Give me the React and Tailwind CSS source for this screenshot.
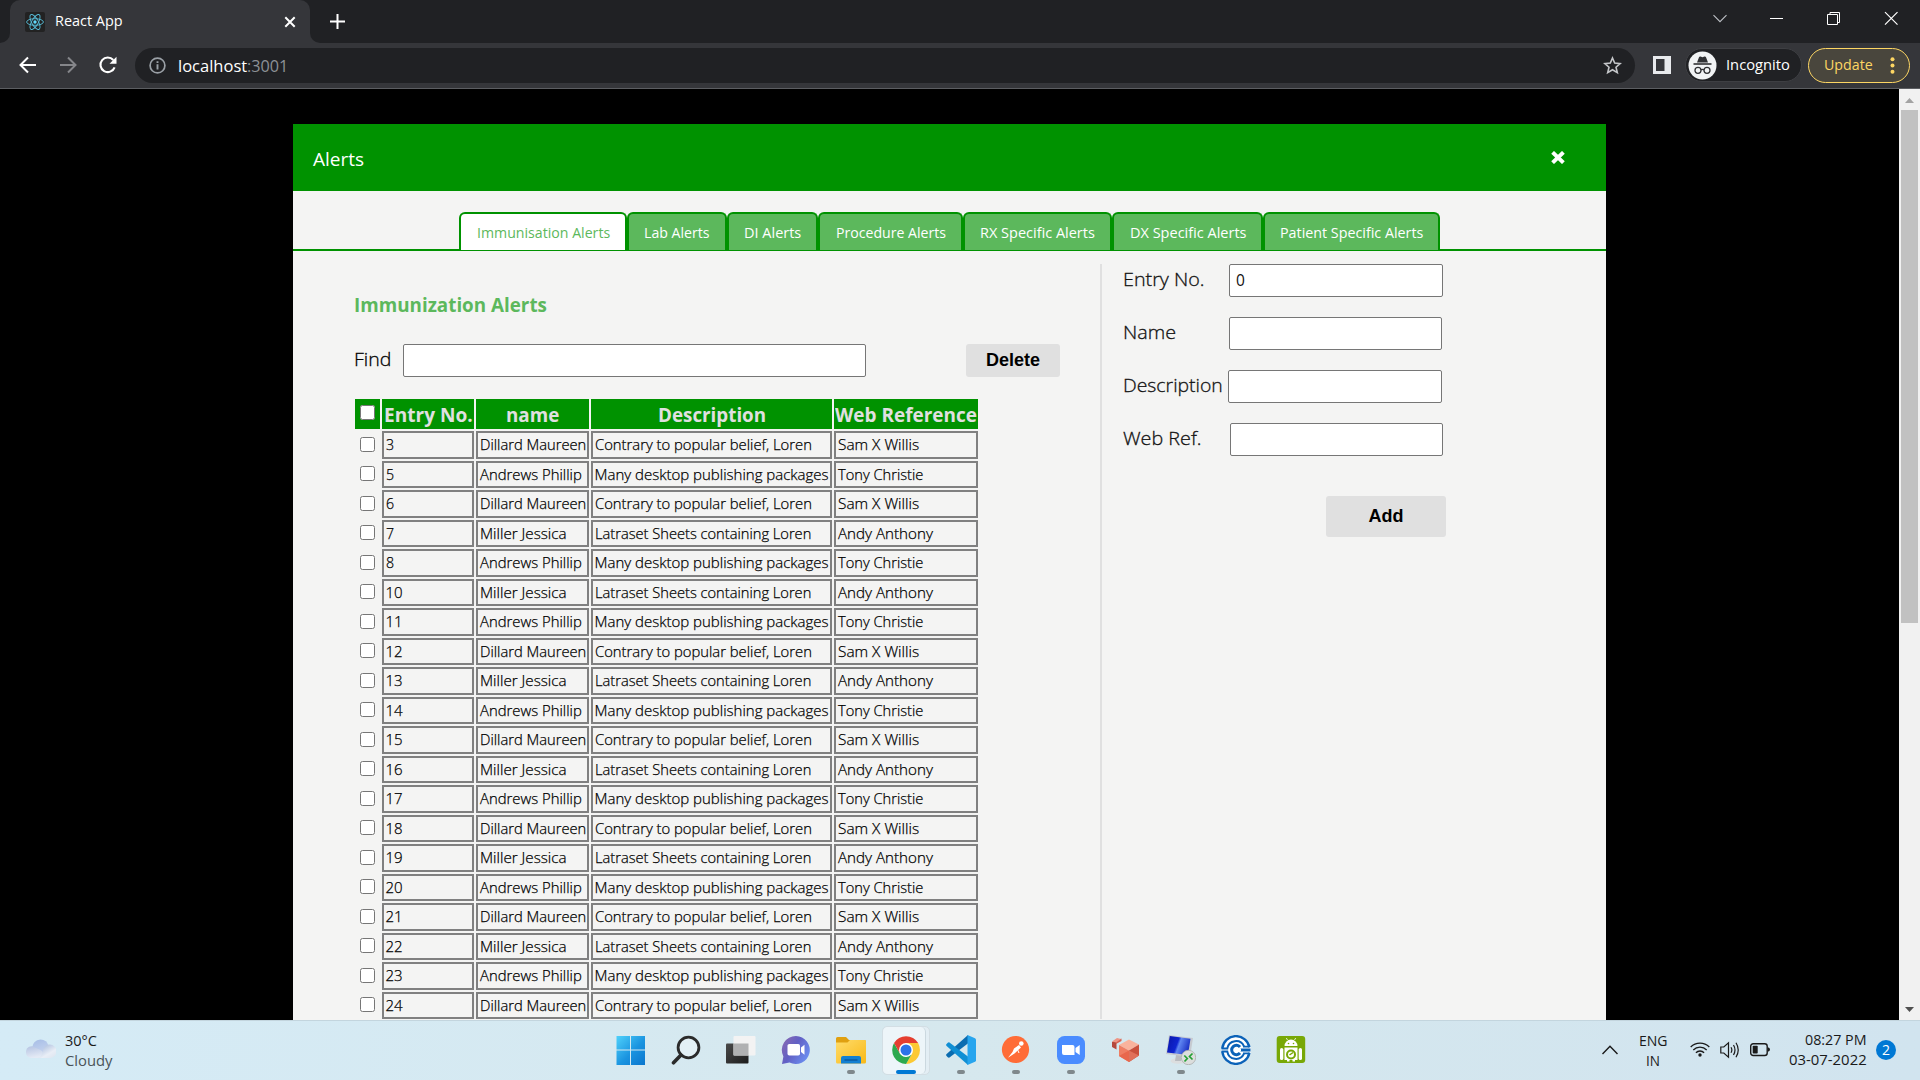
import { useLayoutEffect, useRef, useState } from "react";

// Single line of text whose glyphs are scaled horizontally to fill `w` pixels.
function T({ w, className = "", children }) {
  const ref = useRef(null);
  const [k, setK] = useState(1);
  useLayoutEffect(() => {
    const natural = ref.current.offsetWidth;
    if (natural) setK(w / natural);
  }, [w, children]);
  return (
    <span className={"inline-block whitespace-nowrap text-left " + className} style={{ width: w }}>
      <span ref={ref} className="inline-block origin-left whitespace-nowrap" style={{ transform: `scaleX(${k})` }}>
        {children}
      </span>
    </span>
  );
}

/* ---------- browser chrome ---------- */

function ReactLogo() {
  return (
    <svg width="20" height="20" viewBox="0 0 20 20" className="shrink-0">
      <rect width="20" height="20" rx="2" fill="#222222" />
      <g fill="none" stroke="#61dafb" strokeWidth="0.9" opacity="0.85">
        <ellipse cx="10" cy="10" rx="8.4" ry="3.3" />
        <ellipse cx="10" cy="10" rx="8.4" ry="3.3" transform="rotate(60 10 10)" />
        <ellipse cx="10" cy="10" rx="8.4" ry="3.3" transform="rotate(120 10 10)" />
      </g>
      <circle cx="10" cy="10" r="1.7" fill="#61dafb" />
    </svg>
  );
}

function TabStrip() {
  return (
    <div className="flex h-[43px] items-stretch bg-[#202124] text-white">
      <div className="flex w-[10px] items-end bg-[#35363a]">
        <div className="h-full w-full rounded-br-[10px] bg-[#202124]" />
      </div>
      <div className="w-[300px] bg-[#202124]">
        <div className="flex h-full items-center rounded-t-[10px] bg-[#35363a] pl-[15px]">
          <ReactLogo />
          <T w={68} className="ml-[10px] -mt-px text-[14px] leading-[20px]">React App</T>
          <svg className="ml-[161px]" width="12" height="12" viewBox="0 0 12 12" stroke="#fff" strokeWidth="2" fill="none">
            <path d="M1.3 1.3L10.7 10.7M10.7 1.3L1.3 10.7" />
          </svg>
        </div>
      </div>
      <div className="w-[10px] bg-[#35363a]">
        <div className="h-full rounded-bl-[10px] bg-[#202124]" />
      </div>
      <svg className="ml-[10px] mt-[14px]" width="15" height="15" viewBox="0 0 15 15" stroke="#fff" strokeWidth="2" fill="none">
        <path d="M7.5 0V15M0 7.5H15" />
      </svg>
      <div className="flex-1" />
      <svg className="mr-[22px] mt-[10px]" width="185" height="18" viewBox="0 0 185 18" stroke="#fff" fill="none">
        <path d="M.5 5.2L7 11.7L13.5 5.2" stroke="#bdc1c6" strokeWidth="1.1" />
        <path d="M57 8.5H70" />
        <path d="M114.500 4.500H124.500V14.500H114.500Z" />
        <path d="M117 4V2.500H126.500V12.500H125" />
        <path d="M172 2.200L184.500 14.700M184.500 2.200L172 14.700" strokeWidth="1.2" />
      </svg>
    </div>
  );
}

function Toolbar() {
  return (
    <div className="flex h-[46px] items-center border-b border-[#5c5e62] bg-[#35363a] pb-px pl-[19px] pr-[10px]">
      <svg width="18" height="18" viewBox="0 0 18 18" stroke="#fff" strokeWidth="2" fill="none">
        <path d="M17 9H2M9 1.500L1.500 9L9 16.500" />
      </svg>
      <svg className="ml-[22px]" width="18" height="18" viewBox="0 0 18 18" stroke="#85868a" strokeWidth="2" fill="none">
        <path d="M1 9H16M9 1.500L16.500 9L9 16.500" />
      </svg>
      <svg className="ml-[21px]" width="20" height="18" viewBox="0 0 20 18" fill="none">
        <path d="M15.300 4A7.300 7.300 0 1 0 16.600 11.300" stroke="#fff" strokeWidth="2.1" />
        <path d="M18.500 .8V7.800H11.500Z" fill="#fff" />
      </svg>
      <div className="ml-[17px] flex h-[35px] w-[1500px] items-center rounded-full bg-[#202124] pl-[14px] pr-[13px]">
        <svg width="17" height="17" viewBox="0 0 17 17" fill="none" stroke="#9aa0a6" strokeWidth="1.7">
          <circle cx="8.500" cy="8.500" r="7.400" />
          <path d="M8.500 7.300V12.500M8.500 4.300V6" strokeWidth="1.900" />
        </svg>
        <T w={69} className="ml-[12px] mt-px text-[17px] leading-[24px] text-white">localhost</T>
        <T w={41} className="mt-px text-[17px] leading-[24px] text-[#8d9196]">:3001</T>
        <div className="flex-1" />
        <svg width="19" height="19" viewBox="0 0 19 19" fill="none" stroke="#c4c6c9" strokeWidth="1.6">
          <path d="M9.500 2L11.700 7.100L17.200 7.600L13 11.200L14.300 16.600L9.500 13.700L4.700 16.600L6 11.200L1.800 7.600L7.300 7.100Z" />
        </svg>
      </div>
      <svg className="ml-[18px]" width="18" height="18" viewBox="0 0 18 18">
        <rect width="18" height="18" fill="#e8eaed" />
        <rect x="3" y="3" width="8.500" height="12" fill="#35363a" />
      </svg>
      <div className="ml-[14px] flex h-[34px] w-[117px] items-center rounded-full border border-[#3e3f43] bg-[#202124] pl-[2px]">
        <svg width="29" height="29" viewBox="0 0 29 29">
          <circle cx="14.500" cy="14.500" r="14" fill="#f1f3f4" />
          <g fill="#303134">
            <path d="M9 11.500L11 6.200Q11.500 5.300 12.500 5.600L14.500 6.200L16.500 5.600Q17.500 5.300 18 6.200L20 11.500Z" />
            <rect x="5.500" y="12.200" width="18" height="1.600" />
          </g>
          <g fill="none" stroke="#303134" strokeWidth="1.300">
            <circle cx="10" cy="19.300" r="3" />
            <circle cx="19" cy="19.300" r="3" />
            <path d="M13 19Q14.500 17.800 16 19" />
          </g>
        </svg>
        <T w={64} className="ml-[9px] text-[14.500px] leading-[20px] text-white">Incognito</T>
      </div>
      <div className="ml-[6px] flex h-[35px] w-[102px] items-center rounded-full border border-[#fdd663] bg-[#49463d] pl-[15px]">
        <T w={49} className="text-[14.500px] leading-[20px] text-[#fdd663]">Update</T>
        <svg className="ml-[17px]" width="5" height="17" viewBox="0 0 5 17" fill="#fdd663">
          <circle cx="2.500" cy="2.200" r="2" />
          <circle cx="2.500" cy="8.500" r="2" />
          <circle cx="2.500" cy="14.800" r="2" />
        </svg>
      </div>
    </div>
  );
}

/* ---------- page ---------- */

const TABS = [
  ["Immunisation Alerts", 133, "w-[168px]"],
  ["Lab Alerts", 66, "w-[100px]"],
  ["DI Alerts", 57, "w-[91px]"],
  ["Procedure Alerts", 110, "w-[145px]"],
  ["RX Specific Alerts", 115, "w-[149px]"],
  ["DX Specific Alerts", 116, "w-[151px]"],
  ["Patient Specific Alerts", 143, "w-[177px]"],
];

function Tabs() {
  return (
    <div className="mt-[21px] flex h-[39px] justify-center border-b-2 border-[#009200]">
      {TABS.map(([label, w, cls], i) => (
        <div
          key={label}
          className={
            "flex h-[38px] items-center justify-center rounded-t-[6px] border-2 border-b-0 border-[#009200] text-[15px] leading-[20px] " +
            cls +
            (i === 0 ? " bg-white text-[#5cb85c]" : " bg-[#5cb85c] text-white")
          }
        >
          <T w={w}>{label}</T>
        </div>
      ))}
    </div>
  );
}

const PEOPLE = {
  D: [["Dillard Maureen", 106], ["Contrary to popular belief, Loren", 217], ["Sam X Willis", 81]],
  A: [["Andrews Phillip", 102], ["Many desktop publishing packages", 234], ["Tony Christie", 85]],
  M: [["Miller Jessica", 86], ["Latraset Sheets containing Loren", 216], ["Andy Anthony", 95]],
};
const ROWS = [
  [3, "D"], [5, "A"], [6, "D"], [7, "M"], [8, "A"], [10, "M"], [11, "A"], [12, "D"], [13, "M"], [14, "A"],
  [15, "D"], [16, "M"], [17, "A"], [18, "D"], [19, "M"], [20, "A"], [21, "D"], [22, "M"], [23, "A"], [24, "D"],
];

const COLS = "grid grid-cols-[25px_92px_113px_241px_144px] gap-x-[2px]";

function Cell({ w, children }) {
  return (
    <div className="flex items-center border-2 border-[#808080] pb-px pl-[1.5px]">
      <T w={w}>{children}</T>
    </div>
  );
}

function Head({ w, children }) {
  return (
    <div className="flex items-center justify-center bg-[#009200] pt-[1px] font-bold text-[#e0e0e0]">
      <T w={w}>{children}</T>
    </div>
  );
}

function AlertTable() {
  return (
    <div className="mt-[22px] flex w-[623px] flex-col gap-[2px]">
      <div className={COLS + " h-[30px] text-[19.500px] leading-[26px]"}>
        <div className="flex justify-center bg-[#009200] pt-[6px]">
          <input type="checkbox" className="h-[15px] w-[15px]" />
        </div>
        <Head w={89}>Entry No.</Head>
        <Head w={53}>name</Head>
        <Head w={108}>Description</Head>
        <Head w={142}>Web Reference</Head>
      </div>
      {ROWS.map(([n, p]) => (
        <div key={n} className={COLS + " h-[27.5px] text-[15px] font-light leading-[20px] text-black [-webkit-text-stroke:0.25px_#000]"}>
          <div className="flex justify-center pt-[5.5px]">
            <input type="checkbox" className="h-[15px] w-[15px]" />
          </div>
          <Cell w={n > 9 ? 17 : 8.5}>{String(n)}</Cell>
          {PEOPLE[p].map(([t, w]) => (
            <Cell key={t} w={w}>{t}</Cell>
          ))}
        </div>
      ))}
    </div>
  );
}

function Field({ label, w, value = "", cls }) {
  return (
    <div className="flex h-[33px] items-start">
      <T w={w} className="mt-[2px] text-[19px] font-light leading-[26px] text-[#111] [-webkit-text-stroke:0.3px_#111]">{label}</T>
      <div className={"flex h-[33px] items-center rounded-[2px] border border-[#767676] bg-white pl-[6px] text-[15.500px] leading-[22px] text-[#111] " + cls}>
        <span className="-mt-px">{value}</span>
      </div>
    </div>
  );
}

function Page() {
  return (
    <div className="flex h-[931px] justify-between overflow-hidden bg-black">
      <div className="ml-[293px] mt-[35px] w-[1313px] bg-[#f4f4f3]">
        <div className="flex h-[67px] items-center justify-between bg-[#009200] pl-[20px] pr-[41px] text-white">
          <T w={51} className="mt-[2px] text-[19px] leading-[26px]">Alerts</T>
          <svg width="14" height="13" viewBox="0 0 14 13" stroke="#fff" strokeWidth="4" fill="none">
            <path d="M1.600 1.400L12.400 11.600M12.400 1.400L1.600 11.600" />
          </svg>
        </div>
        <Tabs />
        <div className="flex pt-[13px]">
          <div className="w-[807px] pl-[60.5px]">
            <T w={193} className="mt-[28px] block text-[19.500px] font-bold leading-[26px] text-[#5cb85c]">Immunization Alerts</T>
            <div className="mt-[26px] flex h-[33px] items-center">
              <T w={37} className="-mt-[3px] text-[19px] font-light leading-[26px] text-black [-webkit-text-stroke:0.3px_#000]">Find</T>
              <div className="ml-[12.5px] h-[33px] w-[463px] rounded-[2px] border border-[#767676] bg-white" />
              <div className="ml-[100px] flex h-[33px] w-[94px] items-center justify-center rounded-[3px] bg-[#e0e0e0] font-['Liberation_Sans',sans-serif] text-[18px] font-bold text-black">
                Delete
              </div>
            </div>
            <div className="pl-[1.5px]">
              <AlertTable />
            </div>
          </div>
          <div className="flex flex-1 flex-col gap-[20px] border-l-2 border-[#e0e0e0] pl-[20.5px]">
            <Field label="Entry No." w={82} cls="ml-[24.5px] w-[214px]" value="0" />
            <Field label="Name" w={53} cls="ml-[53.5px] w-[213px]" />
            <Field label="Description" w={100} cls="ml-[5.5px] w-[214px]" />
            <Field label="Web Ref." w={79} cls="ml-[28.5px] w-[213px]" />
            <div className="ml-[203.5px] mt-[20px] flex h-[41px] w-[120px] items-center justify-center rounded-[3px] bg-[#e0e0e0] font-['Liberation_Sans',sans-serif] text-[18px] font-bold text-black">
              Add
            </div>
          </div>
        </div>
      </div>
      <div className="flex h-full w-[21px] flex-col items-center bg-[#f1f1f1]">
        <svg className="mt-[9px] shrink-0" width="9" height="5" viewBox="0 0 9 5"><path d="M4.500 0L9 5H0Z" fill="#a3a3a3" /></svg>
        <div className="mt-[7px] h-[513px] w-[17px] shrink-0 bg-[#c1c1c1]" />
        <div className="flex-1" />
        <svg className="mb-[8px] shrink-0" width="9" height="5" viewBox="0 0 9 5"><path d="M4.500 5L9 0H0Z" fill="#505050" /></svg>
      </div>
    </div>
  );
}

/* ---------- taskbar ---------- */

const svg = { width: 30, height: 30, viewBox: "0 0 30 30" };

const WindowsIcon = () => (
  <svg {...svg}>
    <defs>
      <linearGradient id="win" gradientUnits="userSpaceOnUse" x1="0" y1="0" x2="30" y2="30">
        <stop offset="0" stopColor="#52d4fc" />
        <stop offset=".55" stopColor="#1a94e0" />
        <stop offset="1" stopColor="#0a74cc" />
      </linearGradient>
    </defs>
    <path fill="url(#win)" d="M.5 1H14V14.500H.5ZM15 1H29V14.500H15ZM.5 15.500H14V30H.5ZM15 15.500H29V30H15Z" />
  </svg>
);

const SearchIcon = () => (
  <svg {...svg} fill="none" stroke="#2b2b2b">
    <circle cx="17.500" cy="12.500" r="10.400" strokeWidth="2.800" fill="#ffffff55" />
    <path d="M10 20L2.500 27.800" strokeWidth="3.600" strokeLinecap="round" />
  </svg>
);

const TaskViewIcon = () => (
  <svg {...svg}>
    <defs>
      <linearGradient id="tv" x1="0" y1="0" x2="1" y2="1">
        <stop offset="0" stopColor="#4a4a4a" />
        <stop offset="1" stopColor="#1c1c1c" />
      </linearGradient>
    </defs>
    <rect x="0" y="8.500" width="22.500" height="20" rx="1" fill="url(#tv)" />
    <rect x="7.500" y="1" width="22" height="19.500" rx="1" fill="#f3f3f3" />
    <rect x="7.500" y="8.500" width="15" height="12" fill="#b0b1b2" />
  </svg>
);

const ChatIcon = () => (
  <svg {...svg}>
    <defs>
      <linearGradient id="chat" x1="0" y1="0" x2="1" y2=".6">
        <stop offset="0" stopColor="#8f6bb0" />
        <stop offset=".5" stopColor="#6260c4" />
        <stop offset="1" stopColor="#6a8bee" />
      </linearGradient>
    </defs>
    <path d="M15 1A14 14 0 1 1 8.500 27.500L1 29L2.400 21.500A14 14 0 0 1 15 1Z" fill="url(#chat)" />
    <rect x="6.500" y="9" width="12.500" height="11.500" rx="1.800" fill="#fff" />
    <path d="M20 12.500L23.500 9.800V19.800L20 17Z" fill="#fff" />
  </svg>
);

const FolderIcon = () => (
  <svg {...svg}>
    <defs>
      <linearGradient id="fold" x1="0" y1="0" x2="1" y2="1">
        <stop offset="0" stopColor="#ffdc6b" />
        <stop offset="1" stopColor="#f9b917" />
      </linearGradient>
    </defs>
    <path d="M0 3.500Q0 2 1.500 2H10L13 5H28.500Q30 5 30 6.500V10H0Z" fill="#e0a010" />
    <path d="M0 7.500H11.500L14 5H28.500Q30 5 30 6.500V27Q30 28.500 28.500 28.500H1.500Q0 28.500 0 27Z" fill="url(#fold)" />
    <path d="M5 28.500V23Q5 21 7 21H23Q25 21 25 23V28.500Z" fill="#1380d2" />
    <path d="M8.500 25H21.500" stroke="#0a4f94" strokeWidth="1.200" />
  </svg>
);

const ChromeIcon = () => (
  <svg {...svg}>
    <path d="M27.120 8.080A14 14 0 0 1 15.060 29L21.100 18.500L15 8.080Z" fill="#fcc934" />
    <path d="M15.060 29A14 14 0 0 1 3.010 8.080L9 18.500Q12 22 15.060 21.500L20.500 19.500Z" fill="#2da94f" />
    <path d="M9 18.500L3.010 8.080A14 14 0 0 1 27.120 8.080H15Z" fill="#e53e30" />
    <circle cx="15" cy="15" r="7" fill="#fff" />
    <circle cx="15" cy="15" r="5.500" fill="#2b73e8" />
  </svg>
);

const CodeIcon = () => (
  <svg {...svg}>
    <path d="M22 0L22.500 8L3.500 22.500Q2.500 23 1.500 22L.4 20.800Q-.3 20 .6 19Z" fill="#0a6cb0" />
    <path d="M22 30L22.500 22L3.500 7.500Q2.500 7 1.500 8L.4 9.200Q-.3 10 .6 11Z" fill="#108fd4" />
    <path d="M21.500 0L29 3.200Q30 3.700 30 4.800V25.200Q30 26.300 29 26.800L21.500 30Z" fill="#27a5ee" />
  </svg>
);

const PostmanIcon = () => (
  <svg {...svg}>
    <circle cx="14.500" cy="14.500" r="13.600" fill="#ff6c37" />
    <circle cx="20.300" cy="8.500" r="2.300" fill="#fff" />
    <path d="M18 10L20 12.500L13.500 18.500L7 22.700L11.500 17L13 13.500Z" fill="#fff" />
    <path d="M16.500 14.500L18 18" stroke="#fff" />
  </svg>
);

const ZoomIcon = () => (
  <svg {...svg}>
    <rect x="1" y="1" width="28" height="28" rx="7.500" fill="#4a8cff" />
    <path d="M6 10H16.500Q18.500 10 18.500 12V20H8Q6 20 6 18ZM19.500 13L23.700 10V20L19.500 17Z" fill="#fff" />
  </svg>
);

const CubesIcon = () => (
  <svg {...svg}>
    <path d="M1 7L5.500 5V14.500L1 12Z" fill="#b5483c" />
    <path d="M5 6L10.500 3.500V6L5 9Z" fill="#d8604e" />
    <path d="M1 6.500L6 3L10 4L5 7.500Z" fill="#ee9484" />
    <path d="M18 4.500L28 9.500L18 15.500L8 10Z" fill="#f9b39d" />
    <path d="M28 9.500V20.500L18 27V15.500Z" fill="#c9503c" />
    <path d="M8 10L18 15.500V27L8 21Z" fill="#ef7e63" />
    <path d="M8 21L18 15.500V27Z" fill="#e8674c" />
    <path d="M28 20.500L18 15.500V27Z" fill="#e0705a" />
  </svg>
);

const RemoteIcon = () => (
  <svg {...svg}>
    <defs>
      <linearGradient id="rdp" x1="0" y1="0" x2="1" y2="0.300">
        <stop offset="0" stopColor="#0a15a8" />
        <stop offset=".5" stopColor="#0e25d0" />
        <stop offset=".6" stopColor="#5f86f2" />
        <stop offset="1" stopColor="#2038c8" />
      </linearGradient>
    </defs>
    <ellipse cx="12" cy="26" rx="7.500" ry="2.800" fill="#dcdedf" />
    <path d="M10 20H15V26H9Z" fill="#b9bcc0" />
    <path d="M3 0L27 3L24 22L0 19Z" fill="#c6cad0" />
    <path d="M3.800 1L24.500 3.800L22 20L1 17.500Z" fill="url(#rdp)" />
    <circle cx="22.500" cy="22.500" r="7.200" fill="#dcdedd" stroke="#a9adab" strokeWidth=".8" />
    <path d="M18.300 20.500L21.300 23.500L18.500 26.500M26.500 18.500L23.500 21.500L26.500 24.500" stroke="#25a035" strokeWidth="1.700" fill="none" />
  </svg>
);

const CircleCIcon = () => (
  <svg {...svg} fill="none" stroke="#0b62b8">
    <circle cx="15" cy="15" r="14.800" fill="#fff" stroke="none" />
    <path d="M1.300 13.500A13.700 13.700 0 0 1 28.400 12.300M28.400 17.700A13.700 13.700 0 0 1 1.300 16.500" strokeWidth="2.400" />
    <path d="M.5 13.400H6.300A8.800 8.800 0 0 1 23 11.300M.5 16.600H6.300A8.800 8.800 0 0 0 23 18.700" strokeWidth="2" />
    <path d="M22 11.700H28.500M22 18.300H28.500" strokeWidth="1.800" />
    <path d="M29.500 15H19.500M19 12A4.700 4.700 0 1 0 19 18" strokeWidth="3" />
    <path d="M15.500 15H20" stroke="#fff" strokeWidth="2.500" />
  </svg>
);

const AndroidIcon = () => (
  <svg {...svg}>
    <rect x=".7" y="1" width="28.500" height="27" rx="3" fill="#78a806" />
    <g fill="#fff">
      <path d="M8.500 11A6.500 6.500 0 0 1 21.500 11Z" />
      <path d="M8.500 12.500H21.500V25H19V26.500H16.500V25H13.500V26.500H11V25H8.500Z" />
      <rect x="4" y="13" width="3.300" height="12" rx="1.600" />
      <rect x="22.700" y="13" width="3.300" height="12" rx="1.600" />
    </g>
    <path d="M11.500 5L10.300 3M18.500 5L19.700 3" stroke="#fff" strokeWidth=".8" />
    <circle cx="12.500" cy="8.500" r=".8" fill="#78a806" />
    <circle cx="17.500" cy="8.500" r=".8" fill="#78a806" />
    <circle cx="15" cy="19.500" r="4" fill="none" stroke="#78a806" strokeWidth="2" />
    <path d="M13.500 20L17 17.500" stroke="#78a806" strokeWidth="1.500" />
  </svg>
);

const APPS = [
  [WindowsIcon, ""], [SearchIcon, ""], [TaskViewIcon, ""], [ChatIcon, ""], [FolderIcon, "open"], [ChromeIcon, "active"],
  [CodeIcon, "open"], [PostmanIcon, "open"], [ZoomIcon, "open"], [CubesIcon, ""], [RemoteIcon, "open"], [CircleCIcon, ""], [AndroidIcon, ""],
];

function AppButton({ icon: Icon, state }) {
  if (state === "active") {
    return (
      <div className="flex w-[55px] justify-center pt-[5px]">
        <div className="h-[49px] w-[48px] rounded-[5px] border border-[#d3dee4] bg-[#e3eef4]">
          <div className="flex h-[47px] w-[43px] flex-col items-center rounded-[5px] border-r border-[#cbd8df] bg-[#edf5f9] pl-[4px] pt-[8px]">
            <Icon />
            <div className="mt-[5px] h-[4px] w-[20px] shrink-0 rounded-full bg-[#0078d4]" />
          </div>
        </div>
      </div>
    );
  }
  return (
    <div className="flex w-[55px] flex-col items-center pt-[14px]">
      <Icon />
      {state === "open" && <div className="mt-[5px] h-[4px] w-[8px] rounded-full bg-[#7f888c]" />}
    </div>
  );
}

function Taskbar() {
  return (
    <div className="flex h-[60px] border-t border-[#c3d5de] bg-linear-to-r from-[#d5ebf6] via-[#d6e8ee] to-[#d1e4ef] text-[#1a1a1a]">
      <div className="flex w-[603px] items-start pl-[26px]">
        <svg className="mt-[18px]" width="30" height="20" viewBox="0 0 30 20">
          <defs>
            <linearGradient id="cl" x1="0" y1="0" x2=".3" y2="1">
              <stop offset="0" stopColor="#a6bde6" />
              <stop offset="1" stopColor="#c9d6ef" />
            </linearGradient>
            <linearGradient id="cl2" x1="0" y1="0" x2=".8" y2="1">
              <stop offset="0" stopColor="#9cb2d8" />
              <stop offset=".7" stopColor="#e9eef6" />
              <stop offset="1" stopColor="#dfe6f1" />
            </linearGradient>
            <linearGradient id="cl3" x1="0" y1="0" x2=".3" y2="1">
              <stop offset="0" stopColor="#b4c3e2" />
              <stop offset="1" stopColor="#e4eaf5" />
            </linearGradient>
          </defs>
          <path d="M6 18V9Q7 1 14.500 .5Q21 .5 22.500 7V18Z" fill="url(#cl)" />
          <path d="M0 13A5.500 5.500 0 0 1 9 8.500Q14 10 18 14V19H5.500A5.500 5.500 0 0 1 0 13Z" fill="url(#cl3)" />
          <path d="M12 19Q16 18 17 11Q19 5 24 5.500A6.700 6.700 0 0 1 23.500 19Z" fill="url(#cl2)" />
        </svg>
        <div className="ml-[9px] mt-[10px] flex flex-col text-[14.500px] leading-[20px]">
          <T w={32}>30°C</T>
          <T w={48} className="text-[#4a5358]">Cloudy</T>
        </div>
      </div>
      {APPS.map(([icon, state], i) => (
        <AppButton key={i} icon={icon} state={state} />
      ))}
      <div className="flex flex-1 items-start justify-end pr-[24px]">
        <svg className="mt-[24px]" width="16" height="10" viewBox="0 0 16 10" fill="none" stroke="#1a1a1a" strokeWidth="1.400">
          <path d="M.500 9L8 1.200L15.500 9" />
        </svg>
        <div className="ml-[20px] mt-[10px] flex w-[30px] flex-col items-center text-[14.500px] leading-[20px]">
          <T w={29}>ENG</T>
          <T w={14}>IN</T>
        </div>
        <svg className="ml-[22px] mt-[20px]" width="20" height="17" viewBox="0 0 20 17" fill="none" stroke="#1a1a1a" strokeWidth="1.300">
          <path d="M.700 6A13 13 0 0 1 19.300 6M3.300 9A9.300 9.300 0 0 1 16.700 9M5.900 11.700A5.800 5.800 0 0 1 14.100 11.700" />
          <circle cx="10" cy="14" r="1.700" fill="#1a1a1a" stroke="none" />
        </svg>
        <svg className="ml-[10px] mt-[20px]" width="21" height="18" viewBox="0 0 21 18" fill="none" stroke="#1a1a1a" strokeWidth="1.200">
          <path d="M.800 6H3.800L8.500 1.800V16.200L3.800 12H.800Z" />
          <path d="M11 6.300Q12.700 9 11 11.700M13.500 4Q16.500 9 13.500 14M16 1.800Q20.500 9 16 16.200" />
        </svg>
        <svg className="ml-[9px] mt-[22px]" width="20" height="14" viewBox="0 0 20 14">
          <rect x=".7" y=".7" width="16.500" height="11.800" rx="2.500" fill="none" stroke="#1a1a1a" strokeWidth="1.400" />
          <rect x="2.700" y="2.700" width="5" height="7.800" rx=".8" fill="#1a1a1a" />
          <path d="M17.800 4.200Q20 4.500 20 6.500Q20 8.500 17.800 8.800Z" fill="#1a1a1a" />
        </svg>
        <div className="ml-[19px] mt-[9px] flex flex-col items-end text-[14.500px] leading-[20px]">
          <T w={62}>08:27 PM</T>
          <T w={78}>03-07-2022</T>
        </div>
        <div className="ml-[9px] mt-[19px] flex h-[20px] w-[20px] items-center justify-center rounded-full bg-[#0078d4] text-[14px] leading-none text-white">
          2
        </div>
      </div>
    </div>
  );
}

export default function App() {
  return (
    <div className="h-[1080px] w-[1920px] overflow-hidden bg-black font-['Open_Sans','Noto_Sans',sans-serif]">
      <TabStrip />
      <Toolbar />
      <Page />
      <Taskbar />
    </div>
  );
}
